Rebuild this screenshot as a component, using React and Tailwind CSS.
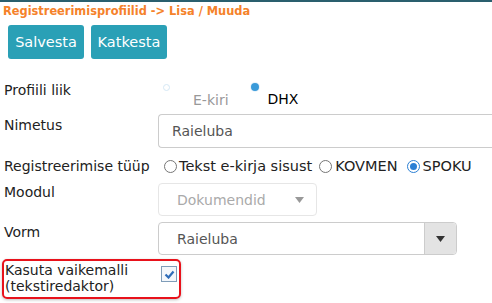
const Radio = ({ checked, size = 13 }) => (
  <span
    className={`inline-flex shrink-0 items-center justify-center rounded-full border ${checked ? 'border-[#2b7fd4]' : 'border-[#767676]'} bg-white`}
    style={{ width: size, height: size }}
  >
    {checked && <span className="h-[7px] w-[7px] rounded-full bg-[#2b7fd4]" />}
  </span>
);

const Caret = ({ className }) => (
  <svg width="9" height="6" viewBox="0 0 9 6" className={className}>
    <path d="M0 0h9L4.5 6z" fill="currentColor" />
  </svg>
);

export default function App() {
  return (
    <div className="h-[303px] w-[492px] overflow-hidden bg-white font-['DejaVu_Sans',Verdana,sans-serif] text-[14px] leading-[16px] text-[#222]">
      <div className="h-[2px] bg-[#2a5f6e]" />
      <h1 className="ml-[3px] mt-[2px] text-[11.4px] font-bold leading-[14px] text-[#f5822a]">Registreerimisprofiilid -&gt; Lisa / Muuda</h1>

      <div className="ml-[8px] mt-[7px] flex gap-[7px]">
        <button className="h-[34px] w-[76px] rounded-[3px] bg-[#2aa0b6] text-[14.5px] text-white">Salvesta</button>
        <button className="h-[34px] w-[76px] rounded-[3px] bg-[#2aa0b6] text-[14.5px] text-white">Katkesta</button>
      </div>

      <div className="mt-[22px] flex h-[28px]">
        <div className="w-[158px] pl-[4px] pt-[1px]">Profiili liik</div>
        <div className="flex">
          <span className="ml-[5px] mt-[3px] h-[7px] w-[7px] rounded-full border border-[#d5e8f5] bg-white" />
          <span className="ml-[23px] mt-[11px] text-[#999]">E-kiri</span>
          <span className="ml-[22px] mt-[2px] h-[8px] w-[8px] rounded-full bg-[#3a9ad9] shadow-[0_0_0_1px_#eaf3fb]" />
          <span className="ml-[9px] mt-[10px] text-black">DHX</span>
        </div>
      </div>

      <div className="mt-[5px] flex">
        <div className="w-[158px] pl-[4px] pt-[3px]">Nimetus</div>
        <div className="flex h-[34px] flex-1 items-center rounded-l-[4px] border border-r-0 border-[#ccc] pl-[13px] text-[#555]">Raieluba</div>
      </div>

      <div className="mt-[10px] flex h-[16px] items-center">
        <div className="w-[160px] whitespace-nowrap pl-[4px]">Registreerimise tüüp</div>
        <label className="ml-[4px] flex items-center gap-[2px] text-[14.5px]"><Radio />Tekst e-kirja sisust</label>
        <label className="ml-[7px] flex items-center gap-[3px] text-[14.5px]"><Radio />KOVMEN</label>
        <label className="ml-[9px] flex items-center gap-[3px] text-[14.5px]"><Radio checked />SPOKU</label>
      </div>

      <div className="mt-[9px] flex">
        <div className="w-[158px] pl-[4px] pt-[1px]">Moodul</div>
        <div className="flex h-[33px] w-[159px] items-center justify-between rounded-[4px] border border-[#e6e6e6] pl-[18px] pr-[12px] text-[#aaa]">
          Dokumendid
          <Caret className="text-[#999]" />
        </div>
      </div>

      <div className="mt-[6px] flex">
        <div className="w-[158px] pl-[4px] pt-[2px]">Vorm</div>
        <div className="flex h-[33px] w-[299px] rounded-[4px] border border-[#ccc]">
          <div className="flex flex-1 items-center pl-[18px] text-[#555]">Raieluba</div>
          <div className="flex w-[32px] items-center justify-center rounded-r-[4px] border-l border-[#ccc] bg-[#e3e3e3]">
            <Caret className="text-[#333]" />
          </div>
        </div>
      </div>

      <div className="ml-[2px] mt-[4px] flex h-[40px] w-[179px] rounded-[5px] border-2 border-[#e8121b] shadow-[0_1px_3px_rgba(0,0,0,0.25)]">
        <div className="w-[157px] whitespace-nowrap pl-[1px] pt-[1px]">Kasuta vaikemalli<br />(tekstiredaktor)</div>
        <span className="mt-[5px] flex h-[16px] w-[16px] shrink-0 items-center justify-center border border-[#7f9db9] bg-[#f4f7fb]">
          <svg width="11" height="9" viewBox="0 0 11 9">
            <path d="M1.5 4.5l3 3 5-6" fill="none" stroke="#2f6cb8" strokeWidth="2.2" />
          </svg>
        </span>
      </div>
    </div>
  );
}
